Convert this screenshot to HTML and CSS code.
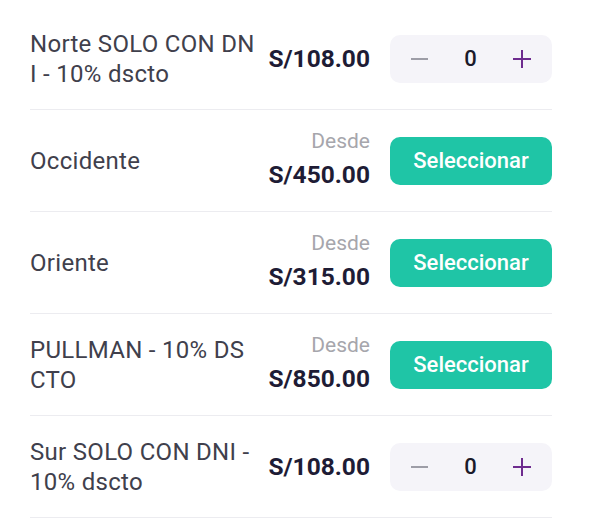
FILE: index.html
```html
<!DOCTYPE html>
<html lang="es">
<head>
    <meta charset="UTF-8">
    <meta name="viewport" content="width=device-width, initial-scale=1.0">
    <title>Entradas</title>
    <link rel="stylesheet" href="styles.css">
</head>
<body>
    <main class="ticket-list">

        <!-- Zona con contador -->
        <div class="ticket">
            <div class="ticket-name">Norte SOLO CON DNI - 10% dscto</div>
            <div class="ticket-price">
                <span class="price">S/108.00</span>
            </div>
            <div class="stepper">
                <button type="button" class="step minus" aria-label="Quitar">
                    <svg width="17" height="18" viewBox="0 0 17 18"><path d="M0 9h17" stroke="currentColor" stroke-width="2"/></svg>
                </button>
                <span class="count">0</span>
                <button type="button" class="step plus" aria-label="Agregar">
                    <svg width="18" height="18" viewBox="0 0 18 18"><path d="M0 9h18M9 0v18" stroke="currentColor" stroke-width="2"/></svg>
                </button>
            </div>
        </div>

        <div class="ticket">
            <div class="ticket-name">Occidente</div>
            <div class="ticket-price">
                <span class="from">Desde</span>
                <span class="price">S/450.00</span>
            </div>
            <button type="button" class="select-btn">Seleccionar</button>
        </div>

        <div class="ticket">
            <div class="ticket-name">Oriente</div>
            <div class="ticket-price">
                <span class="from">Desde</span>
                <span class="price">S/315.00</span>
            </div>
            <button type="button" class="select-btn">Seleccionar</button>
        </div>

        <div class="ticket">
            <div class="ticket-name">PULLMAN - 10% DSCTO</div>
            <div class="ticket-price">
                <span class="from">Desde</span>
                <span class="price">S/850.00</span>
            </div>
            <button type="button" class="select-btn">Seleccionar</button>
        </div>

        <div class="ticket">
            <div class="ticket-name">Sur SOLO CON DNI - 10% dscto</div>
            <div class="ticket-price">
                <span class="price">S/108.00</span>
            </div>
            <div class="stepper">
                <button type="button" class="step minus" aria-label="Quitar">
                    <svg width="17" height="18" viewBox="0 0 17 18"><path d="M0 9h17" stroke="currentColor" stroke-width="2"/></svg>
                </button>
                <span class="count">0</span>
                <button type="button" class="step plus" aria-label="Agregar">
                    <svg width="18" height="18" viewBox="0 0 18 18"><path d="M0 9h18M9 0v18" stroke="currentColor" stroke-width="2"/></svg>
                </button>
            </div>
        </div>

    </main>
</body>
</html>
```

FILE: styles.css
```css
body {
    margin: 0;
    background: #fff;
    font-family: Roboto, "Liberation Sans", Arial, sans-serif;
}
.ticket-list {
    padding: 8px 38px 0 30px;
}
.ticket {
    display: flex;
    align-items: center;
    height: 102px;
    box-sizing: border-box;
    border-bottom: 1px solid #ececf0;
}
.ticket-name {
    flex: 1;
    min-width: 0;
    font-size: 24px;
    line-height: 30px;
    letter-spacing: 0.3px;
    color: #40404c;
    word-break: break-all;
}
.ticket-price {
    display: flex;
    flex-direction: column;
    align-items: flex-end;
    margin: 0 20px 0 10px;
}
.from {
    font-size: 21px;
    line-height: 28px;
    color: #a6a6ac;
}
.price {
    font-size: 24.5px;
    line-height: 30px;
    font-weight: 700;
    color: #1e1c35;
}
.from + .price {
    margin: 5px 0 5px;
}
.stepper {
    display: flex;
    align-items: center;
    justify-content: space-between;
    width: 162px;
    height: 48px;
    box-sizing: border-box;
    padding: 0 21px;
    border-radius: 10px;
    background: #f5f4f9;
}
.step {
    display: flex;
    padding: 0;
    border: none;
    background: none;
    cursor: pointer;
}
.minus {
    color: #9d9da7;
}
.plus {
    color: #6e2b8f;
}
.count {
    font-size: 22px;
    font-weight: 500;
    color: #1a1a2a;
}
.select-btn {
    width: 162px;
    height: 48px;
    border: none;
    border-radius: 10px;
    background: #1fc5a6;
    color: #fff;
    font-family: inherit;
    font-size: 22px;
    font-weight: 500;
    cursor: pointer;
}
```
